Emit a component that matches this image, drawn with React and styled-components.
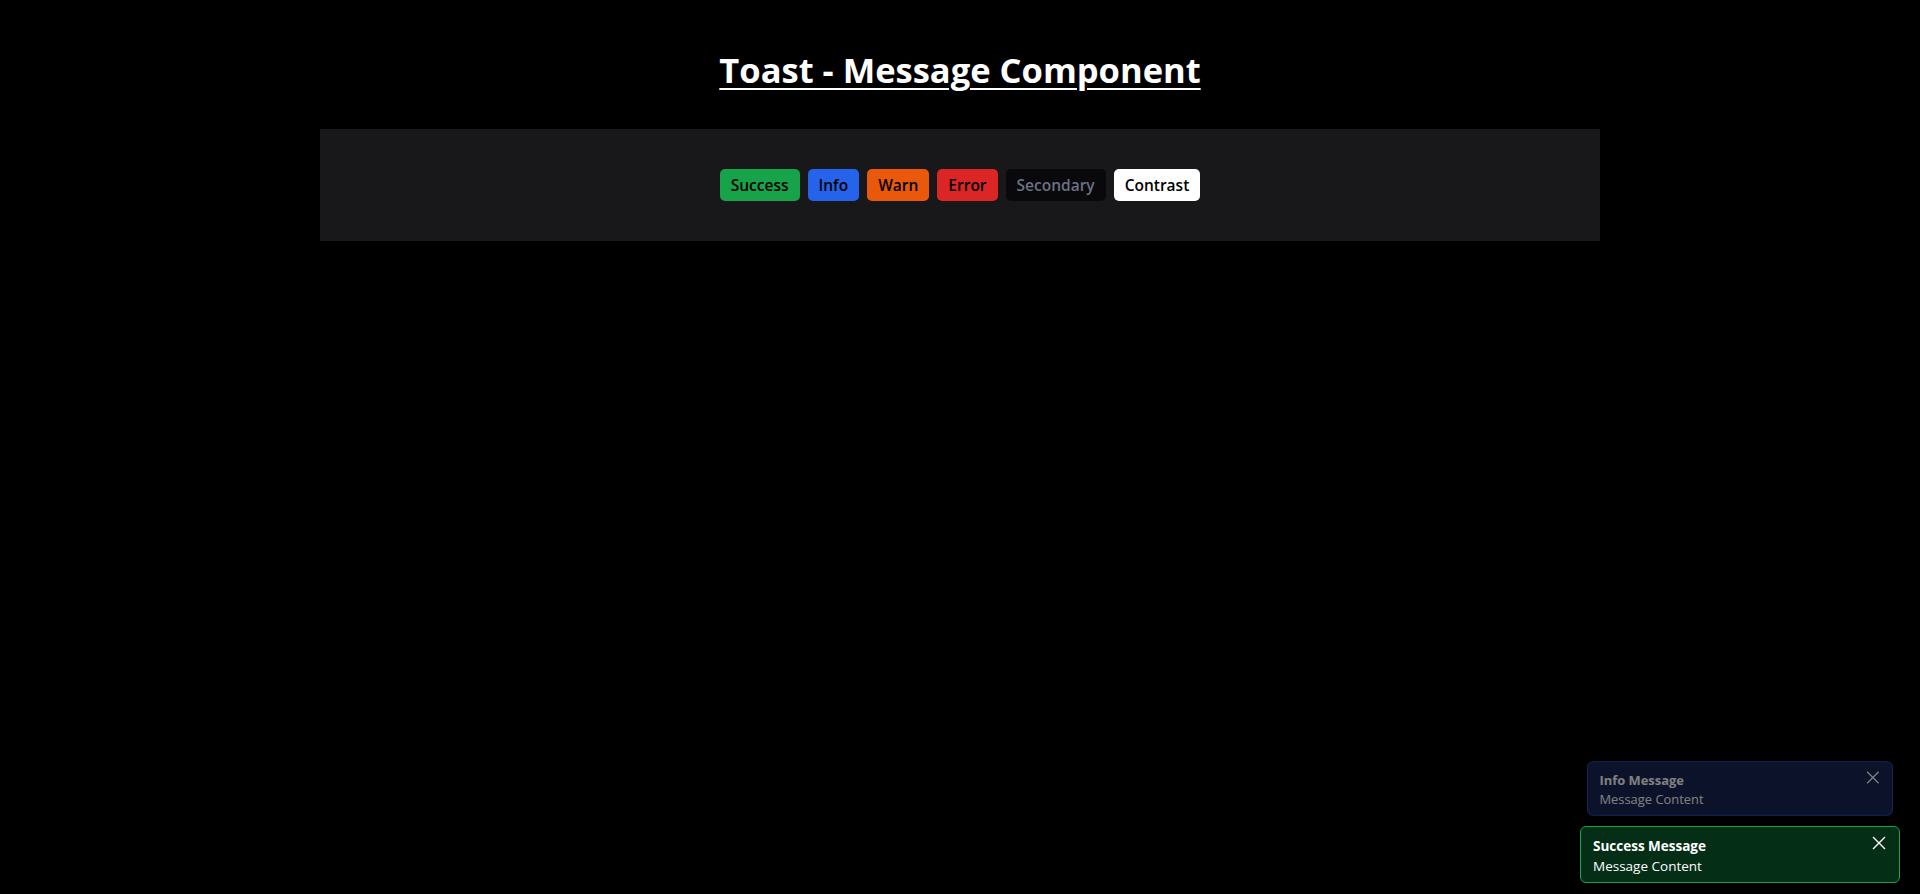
import React from 'react'
import styled, { createGlobalStyle } from 'styled-components'

const GlobalStyle = createGlobalStyle`
  html, body {
    margin: 0;
    padding: 0;
    background: #000;
    color: #fff;
    font-family: 'Open Sans', 'Noto Sans', sans-serif;
  }
`

const VARIANTS = {
  success: { bg: '#16a34a', color: '#000' },
  info: { bg: '#2563eb', color: '#000' },
  warn: { bg: '#ea580c', color: '#000' },
  error: { bg: '#dc2626', color: '#000' },
  secondary: { bg: '#09090b', color: '#6b7185' },
  contrast: { bg: '#fff', color: '#000' },
}

const Page = styled.div`
  min-height: 100vh;
  padding-top: 48px;
  box-sizing: border-box;
`

const Title = styled.h1`
  margin: 0 0 38px;
  text-align: center;
  font-size: 34.5px;
  line-height: 43px;
  font-weight: 700;
  text-decoration: underline;
  text-decoration-thickness: 2px;
  text-underline-offset: 5px;
`

const Panel = styled.section`
  width: 1280px;
  margin: 0 auto;
  padding: 40px 0;
  background: #18181b;
  display: flex;
  justify-content: center;
  gap: 8px;
`

const Button = styled.button`
  border: none;
  border-radius: 5px;
  padding: 4px 11px;
  height: 32px;
  font-family: inherit;
  font-size: 15.5px;
  font-weight: 600;
  line-height: 24px;
  cursor: pointer;
  background: ${(p) => VARIANTS[p.$variant].bg};
  color: ${(p) => VARIANTS[p.$variant].color};
`

const ToastStack = styled.div`
  position: fixed;
  right: 20px;
  bottom: 11px;
  display: flex;
  flex-direction: column;
  gap: 9px;
`

const Toast = styled.div`
  width: 320px;
  box-sizing: border-box;
  display: flex;
  align-items: flex-start;
  padding: 9px 13px 6px 12px;
  border-radius: 6px;
  border: 1px solid ${(p) => p.$border};
  background: ${(p) => p.$bg};
  opacity: ${(p) => (p.$faded ? 0.5 : 1)};
  transform: scale(${(p) => (p.$faded ? 0.956 : 1)});
`

const ToastBody = styled.div`
  flex: 1;
  font-size: 13.5px;
  line-height: 20px;
  color: #fff;
`

const ToastTitle = styled.div`
  font-weight: 700;
`

const Close = styled.button`
  border: none;
  background: none;
  padding: 0;
  width: 14px;
  height: 14px;
  color: #fff;
  display: flex;
`

const CloseIcon = () => (
  <svg width="14" height="14" viewBox="0 0 14 14" fill="none">
    <path d="M1 1L13 13M13 1L1 13" stroke="currentColor" strokeWidth="1.4" />
  </svg>
)

const buttons = [
  ['success', 'Success'],
  ['info', 'Info'],
  ['warn', 'Warn'],
  ['error', 'Error'],
  ['secondary', 'Secondary'],
  ['contrast', 'Contrast'],
]

export default function App() {
  return (
    <Page>
      <GlobalStyle />
      <Title>Toast - Message Component</Title>
      <Panel>
        {buttons.map(([v, label]) => (
          <Button key={v} $variant={v}>
            {label}
          </Button>
        ))}
      </Panel>
      <ToastStack>
        <Toast $bg="#172554" $border="#2a52bd" $faded>
          <ToastBody>
            <ToastTitle>Info Message</ToastTitle>
            Message Content
          </ToastBody>
          <Close>
            <CloseIcon />
          </Close>
        </Toast>
        <Toast $bg="#052e16" $border="#16a34a">
          <ToastBody>
            <ToastTitle>Success Message</ToastTitle>
            Message Content
          </ToastBody>
          <Close>
            <CloseIcon />
          </Close>
        </Toast>
      </ToastStack>
    </Page>
  )
}
